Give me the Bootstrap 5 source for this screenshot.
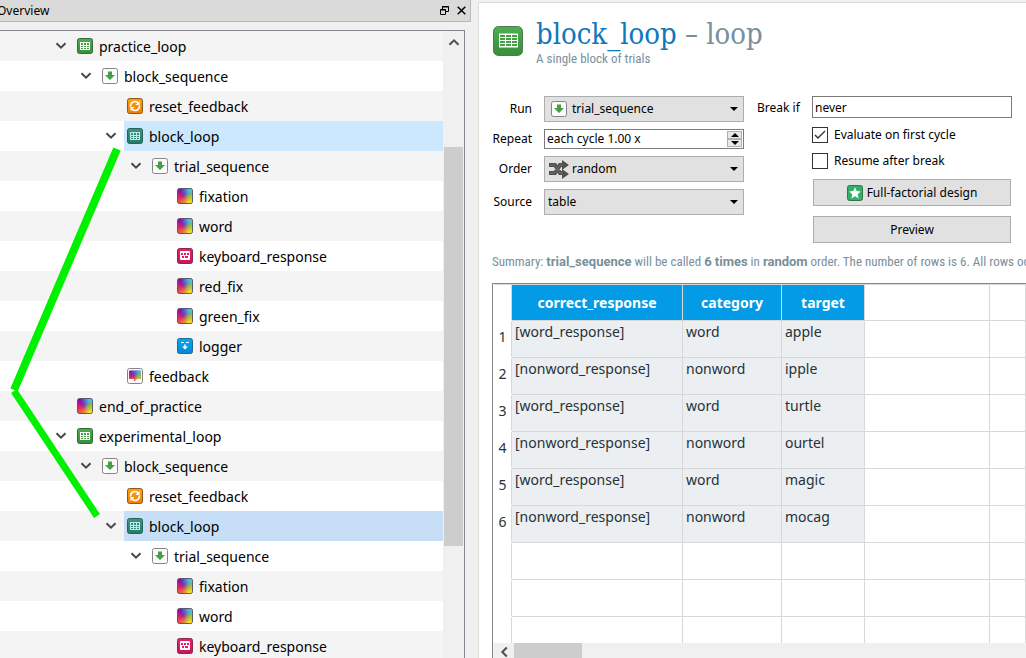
<!DOCTYPE html>
<html lang="en">
<head>
<meta charset="utf-8">
<meta name="viewport" content="width=device-width, initial-scale=1">
<title>block_loop</title>
<link href="https://cdn.jsdelivr.net/npm/bootstrap@5.3.0/dist/css/bootstrap.min.css" rel="stylesheet">
<style>
  body { background: #f0f0f0; color: #000; font: 12px/16px "Noto Sans", sans-serif; }

  /* overview dock */
  .dock { flex: 0 0 478px; }
  .dock-title { width: 471px; height: 22px; background: #dadada; border: 1px solid #b9b9b9; border-width: 0 1px 1px 0; }
  .dock-title h2 { font-size: 12px; line-height: 22px; margin-left: -3px; padding-top: 1px; font-weight: 400; }
  .dock-btn { width: 17px; height: 20px; border: 0; background: none; padding: 0; line-height: 0; }
  .tree-frame { width: 465px; margin-top: 8px; border: 1px solid #828790; border-width: 1px 1px 0 0; background: #f0f0f0; min-height: 0; }
  .tree { background: #fff; min-width: 0; margin-right: 1px; }
  .tree li { height: 30px; font-size: 14px; line-height: 32px; white-space: nowrap; }
  .tree li:nth-child(odd) { background: #f4f4f4; }
  .tree .d1 { padding-left: 49px; }
  .tree .d2 { padding-left: 74px; }
  .tree .d3 { padding-left: 99px; }
  .tree .d4 { padding-left: 124px; }
  .tree .d6 { padding-left: 174px; }
  .twist { flex: 0 0 25px; border: 0; background: none; padding: 0 2px 0 0; line-height: 0; }
  .item { gap: 6px; padding-left: 3px; }
  .item .ico { margin-top: 7px; }
  .item.picked { background: #cce8ff; }
  .item.picked.idle { background: #c6dff6; }
  .ico { width: 16px; height: 16px; flex: none; display: block; }
  .vbar { flex: 0 0 20px; background: #f0f0f0; padding-right: 1px; }
  .vbar button { border: 0; background: none; height: 22px; padding: 0; line-height: 0; }
  .vbar-thumb { margin-top: 94px; height: 399px; background: #cdcdcd; }
  .links { position: absolute; left: 0; top: 140px; pointer-events: none; }

  /* item editor */
  .editor { margin-top: 2px; padding: 0 0 0 13px; background: #fff; border: 1px solid #dcdcdc; border-width: 1px 0 0 1px; min-width: 0; }
  .editor-head { padding-top: 15px; gap: 13px; color: #78909c; }
  .editor-head h1 { font: 29px/33px "DejaVu Serif Condensed", "DejaVu Serif", serif; margin: 0; color: #78909c; }
  .editor-head h1 span { color: #0f77bd; }
  .cond { font-family: "Roboto Condensed", Roboto, sans-serif; font-size: 13px; line-height: 16px; color: #78909c; }
  .cond b { font-family: Roboto, sans-serif; }
  .controls { margin-top: 29px; gap: 13px; }
  .left-form { display: grid; grid-template-columns: 40px 200px; column-gap: 12px; row-gap: 7px; align-items: center; align-content: start; }
  .left-form label { text-align: right; }
  .right-form { width: 255px; display: grid; grid-template-columns: 43px 200px; column-gap: 12px; align-content: start; }
  .pick { position: relative; }
  .pick svg.lead-ico { position: absolute; left: 7px; top: 5px; pointer-events: none; }
  .pick svg.wide { left: 5px; top: 4px; width: 20px; height: 19px; }
  .pick select { display: block; width: 100%; height: 26px; padding: 0 3px; border: 1px solid #adadad; border-radius: 0; color: #000; appearance: none;
    background: #e1e1e1 url("data:image/svg+xml,%3Csvg xmlns='http://www.w3.org/2000/svg' width='8' height='4'%3E%3Cpath d='M0 0h8L4 4z'/%3E%3C/svg%3E") no-repeat right 5px center; }
  .pick .with-ico { padding-left: 27px; }
  .field { height: 22px; border: 1px solid #7a7a7a; padding: 0 2px; background: #fff; color: #000; width: 100%; border-radius: 0; }
  .spin { height: 20px; border: 1px solid #7a7a7a; background: #fff; padding: 1px; }
  .spin input { border: 0; padding: 0 1px; min-width: 0; outline: 0; }
  .spin button { width: 15px; height: 8px; border: 1px solid #b0b0b0; background: #e8e8e8; padding: 0; line-height: 0; }
  .options { gap: 10px; padding-top: 9px; }
  .tick { gap: 6px; height: 16px; }
  .tick input { appearance: none; width: 16px; height: 16px; margin: 0; border: 1px solid #333; background: #fff; }
  .tick input:checked { background: #fff url("data:image/svg+xml,%3Csvg xmlns='http://www.w3.org/2000/svg' width='14' height='14'%3E%3Cpath d='M2 7l3 3 7-7' fill='none' stroke='%23333' stroke-width='1.4'/%3E%3C/svg%3E"); }
  .push { height: 27px; margin: 0 1px; border: 1px solid #adadad; background: #e1e1e1; color: #000; gap: 4px; padding: 0; }
  .summary { margin: 11px 0 13px; white-space: nowrap; overflow: hidden; }

  /* trial table */
  .sheet-frame { border: 1px solid #828790; border-width: 1px 0 0 1px; min-height: 0; }
  .sheet { table-layout: fixed; border-collapse: collapse; width: 100%; font-size: 14px; line-height: 19px; color: #263238; }
  .sheet th, .sheet td { height: 37px; padding: 1px 3px; border: 1px solid #d8d8d8; vertical-align: top; white-space: nowrap; }
  .sheet thead th { height: 36px; vertical-align: middle; text-align: center; color: #fff; }
  .sheet thead .named { background: #039be5; }
  .sheet tbody th { font-weight: 400; text-align: center; padding: 6px 0 0; border-color: #fff; border-right-color: #d8d8d8; }
  .sheet thead th:first-child { border-left: 0; border-bottom-color: #fff; }
  .sheet .full td:nth-child(-n+4) { background: #eceff1; }
  .hbar { flex: 0 0 14px; background: #f0f0f0; }
  .hbar button { width: 21px; border: 0; background: none; padding: 3px 0 0; line-height: 0; }
  .hbar-thumb { width: 68px; background: #cdcdcd; }
</style>
</head>
<body class="vh-100 overflow-hidden">

<svg width="0" height="0" class="position-absolute" aria-hidden="true">
  <defs>
    <linearGradient id="gGreen" x2="0" y2="1"><stop stop-color="#4caf50"/><stop offset="1" stop-color="#388e3c"/></linearGradient>
    <linearGradient id="gTeal" x2="0" y2="1"><stop stop-color="#369a78"/><stop offset="1" stop-color="#267b69"/></linearGradient>
    <linearGradient id="gOrange" x2="0" y2="1"><stop stop-color="#ffa010"/><stop offset="1" stop-color="#f57c00"/></linearGradient>
    <linearGradient id="gPink" x2="0" y2="1"><stop stop-color="#ec1e63"/><stop offset="1" stop-color="#c2185b"/></linearGradient>
    <linearGradient id="gBlue" x2="0" y2="1"><stop stop-color="#03a9f4"/><stop offset="1" stop-color="#0288d1"/></linearGradient>
    <radialGradient id="rCyan" cx="1" cy="0" r=".8"><stop offset=".25" stop-color="#4bc4e0"/><stop offset="1" stop-color="#4bc4e0" stop-opacity="0"/></radialGradient>
    <radialGradient id="rYellow" cx=".85" cy="1" r=".7"><stop offset=".15" stop-color="#ffe616"/><stop offset=".5" stop-color="#e8c832" stop-opacity=".7"/><stop offset="1" stop-color="#e8b02c" stop-opacity="0"/></radialGradient>
    <radialGradient id="rRed" cx=".15" cy=".95" r=".85"><stop offset=".15" stop-color="#ff4a3c"/><stop offset="1" stop-color="#ee1a5a" stop-opacity="0"/></radialGradient>
    <radialGradient id="rGreen" cx="1" cy=".6" r=".5"><stop stop-color="#7edb10"/><stop offset="1" stop-color="#7edb10" stop-opacity="0"/></radialGradient>
    <linearGradient id="gViolet"><stop stop-color="#9c0aa0"/><stop offset=".45" stop-color="#5a1fc4"/><stop offset="1" stop-color="#4a78d8"/></linearGradient>
  </defs>
  <symbol id="loop" viewBox="0 0 16 16"><rect x=".5" y=".5" width="15" height="15" rx="2" fill="url(#gGreen)" stroke="#38663b"/><path d="M3 4h10v8H3z" fill="#fff"/><path d="M4 5h2v2H4zm3 0h2v2H7zm3 0h2v2h-2zM4 8h2v1H4zm3 0h2v1H7zm3 0h2v1h-2zM4 10h2v1H4zm3 0h2v1H7zm3 0h2v1h-2z" fill="#43a047"/></symbol>
  <symbol id="loopsel" viewBox="0 0 16 16"><rect x=".5" y=".5" width="15" height="15" rx="2" fill="url(#gTeal)" stroke="#2c6163"/><path d="M3 4h10v8H3z" fill="#c4e6f4"/><path d="M4 5h2v2H4zm3 0h2v2H7zm3 0h2v2h-2zM4 8h2v1H4zm3 0h2v1H7zm3 0h2v1h-2zM4 10h2v1H4zm3 0h2v1H7zm3 0h2v1h-2z" fill="#2f8b72"/></symbol>
  <symbol id="seq" viewBox="0 0 16 16"><rect x=".5" y=".5" width="15" height="15" rx="2" fill="#fbfbfb" stroke="#858585"/><path d="M6 3.500h4V7h3l-5 5-5-5h3z" fill="#43a047"/></symbol>
  <symbol id="reset" viewBox="0 0 16 16"><rect x=".5" y=".5" width="15" height="15" rx="2" fill="url(#gOrange)" stroke="#8a5a20"/><path d="M3.600 8.600A4.400 4.400 0 0 1 11 4.800M12.400 7.400A4.400 4.400 0 0 1 5 11.200" fill="none" stroke="#fff" stroke-width="1.600"/><path d="M12.600 2.800v4.100H8.500zM3.400 13.200V9.100h4.100z" fill="#fff"/></symbol>
  <symbol id="sketch" viewBox="0 0 16 16"><g id="rainbow"><rect x=".5" y=".5" width="15" height="15" rx="2" fill="url(#gViolet)"/><rect x=".5" y=".5" width="15" height="15" rx="2" fill="url(#rRed)"/><rect x=".5" y=".5" width="15" height="15" rx="2" fill="url(#rCyan)"/><rect x=".5" y=".5" width="15" height="15" rx="2" fill="url(#rGreen)"/><rect x=".5" y=".5" width="15" height="15" rx="2" fill="url(#rYellow)"/></g><rect x=".5" y=".5" width="15" height="15" rx="2" fill="none" stroke="#554a5c" stroke-opacity=".85"/></symbol>
  <clipPath id="bubble"><path d="M3 2.500h10a1 1 0 0 1 1 1V10a1 1 0 0 1-1 1H9.500L7 13.500V11H3a1 1 0 0 1-1-1V3.500a1 1 0 0 1 1-1z"/></clipPath>
  <symbol id="feedback" viewBox="0 0 16 16"><rect x=".5" y=".5" width="15" height="15" rx="2" fill="#fafafa" stroke="#858585"/><use href="#rainbow" clip-path="url(#bubble)"/></symbol>
  <symbol id="keys" viewBox="0 0 16 16"><rect x=".5" y=".5" width="15" height="15" rx="2" fill="url(#gPink)" stroke="#8b2850"/><rect x="3" y="3" width="10" height="9" rx="1" fill="#fff"/><path d="M4 5h2v2H4zm3 0h2v2H7zm3 0h2v2h-2zM5 8h2v2H5zm3 0h3v2H8z" fill="#e01e60"/></symbol>
  <symbol id="logger" viewBox="0 0 16 16"><rect x=".5" y=".5" width="15" height="15" rx="2" fill="url(#gBlue)" stroke="#206a94"/><path d="M4 4h3v1H4zm5 0h3v1H9zM7.200 6.500h1.600v2H11L8 11.500l-3-3h2.200z" fill="#fff"/></symbol>
  <symbol id="chev" viewBox="0 0 12 8"><path d="M1.500 1.200L6 5.700l4.500-4.500" fill="none" stroke="#484848" stroke-width="2"/></symbol>
</svg>

<div class="d-flex h-100">
  <aside class="dock d-flex flex-column position-relative">
    <header class="dock-title d-flex align-items-center">
      <h2 class="mb-0 me-auto">Overview</h2>
      <button class="dock-btn" aria-label="Float"><svg width="9" height="9"><path d="M2.500 3V.5h6v5H6M2 1h7M.5 3.500h5v5h-5zM0 4h6" fill="none" stroke="#000"/></svg></button>
      <button class="dock-btn" aria-label="Close"><svg width="9" height="9"><path d="M.7.700l7.600 7.600M8.300.700L.700 8.300" stroke="#000" stroke-width="1.500"/></svg></button>
    </header>
    <div class="tree-frame d-flex flex-fill overflow-hidden">
      <ul class="tree list-unstyled mb-0 flex-fill">
        <li class="d-flex d1"><button class="twist" aria-label="Collapse"><svg width="12" height="8"><use href="#chev"/></svg></button><div class="item d-flex flex-fill"><svg class="ico"><use href="#loop"/></svg>practice_loop</div></li>
        <li class="d-flex d2"><button class="twist" aria-label="Collapse"><svg width="12" height="8"><use href="#chev"/></svg></button><div class="item d-flex flex-fill"><svg class="ico"><use href="#seq"/></svg>block_sequence</div></li>
        <li class="d-flex d4"><div class="item d-flex flex-fill"><svg class="ico"><use href="#reset"/></svg>reset_feedback</div></li>
        <li class="d-flex d3"><button class="twist" aria-label="Collapse"><svg width="12" height="8"><use href="#chev"/></svg></button><div class="item picked d-flex flex-fill"><svg class="ico"><use href="#loopsel"/></svg>block_loop</div></li>
        <li class="d-flex d4"><button class="twist" aria-label="Collapse"><svg width="12" height="8"><use href="#chev"/></svg></button><div class="item d-flex flex-fill"><svg class="ico"><use href="#seq"/></svg>trial_sequence</div></li>
        <li class="d-flex d6"><div class="item d-flex flex-fill"><svg class="ico"><use href="#sketch"/></svg>fixation</div></li>
        <li class="d-flex d6"><div class="item d-flex flex-fill"><svg class="ico"><use href="#sketch"/></svg>word</div></li>
        <li class="d-flex d6"><div class="item d-flex flex-fill"><svg class="ico"><use href="#keys"/></svg>keyboard_response</div></li>
        <li class="d-flex d6"><div class="item d-flex flex-fill"><svg class="ico"><use href="#sketch"/></svg>red_fix</div></li>
        <li class="d-flex d6"><div class="item d-flex flex-fill"><svg class="ico"><use href="#sketch"/></svg>green_fix</div></li>
        <li class="d-flex d6"><div class="item d-flex flex-fill"><svg class="ico"><use href="#logger"/></svg>logger</div></li>
        <li class="d-flex d4"><div class="item d-flex flex-fill"><svg class="ico"><use href="#feedback"/></svg>feedback</div></li>
        <li class="d-flex d2"><div class="item d-flex flex-fill"><svg class="ico"><use href="#sketch"/></svg>end_of_practice</div></li>
        <li class="d-flex d1"><button class="twist" aria-label="Collapse"><svg width="12" height="8"><use href="#chev"/></svg></button><div class="item d-flex flex-fill"><svg class="ico"><use href="#loop"/></svg>experimental_loop</div></li>
        <li class="d-flex d2"><button class="twist" aria-label="Collapse"><svg width="12" height="8"><use href="#chev"/></svg></button><div class="item d-flex flex-fill"><svg class="ico"><use href="#seq"/></svg>block_sequence</div></li>
        <li class="d-flex d4"><div class="item d-flex flex-fill"><svg class="ico"><use href="#reset"/></svg>reset_feedback</div></li>
        <li class="d-flex d3"><button class="twist" aria-label="Collapse"><svg width="12" height="8"><use href="#chev"/></svg></button><div class="item picked idle d-flex flex-fill"><svg class="ico"><use href="#loopsel"/></svg>block_loop</div></li>
        <li class="d-flex d4"><button class="twist" aria-label="Collapse"><svg width="12" height="8"><use href="#chev"/></svg></button><div class="item d-flex flex-fill"><svg class="ico"><use href="#seq"/></svg>trial_sequence</div></li>
        <li class="d-flex d6"><div class="item d-flex flex-fill"><svg class="ico"><use href="#sketch"/></svg>fixation</div></li>
        <li class="d-flex d6"><div class="item d-flex flex-fill"><svg class="ico"><use href="#sketch"/></svg>word</div></li>
        <li class="d-flex d6"><div class="item d-flex flex-fill"><svg class="ico"><use href="#keys"/></svg>keyboard_response</div></li>
      </ul>
      <div class="vbar d-flex flex-column">
        <button aria-label="Scroll up"><svg width="12" height="8"><path d="M1.500 6.800L6 2.300l4.500 4.500" fill="none" stroke="#505050" stroke-width="2"/></svg></button>
        <div class="vbar-thumb"></div>
      </div>
    </div>
    <svg class="links" width="130" height="385"><path d="M117 9L14 250" stroke="#00f000" stroke-width="8"/><path d="M14 251l83 125" stroke="#00f000" stroke-width="7"/></svg>
  </aside>

  <main class="editor flex-fill d-flex flex-column overflow-hidden">
    <header class="editor-head d-flex">
      <svg width="31" height="31" class="mt-2 flex-shrink-0" viewBox="0 0 31 31"><rect x="1.500" y=".5" width="29" height="29" rx="5" fill="url(#gGreen)" stroke="#4e7a50"/><path d="M7 7.500h19v14H7z" fill="#fff"/><path d="M8 9h5v2H8zm6 0h5v2h-5zm6 0h5v2h-5zM8 12h5v2H8zm6 0h5v2h-5zm6 0h5v2h-5zM8 15h5v2H8zm6 0h5v2h-5zm6 0h5v2h-5zM8 18h5v2H8zm6 0h5v2h-5zm6 0h5v2h-5z" fill="#43a047"/></svg>
      <div>
        <h1><span>block_loop</span> – loop</h1>
        <div class="cond">A single block of trials</div>
      </div>
    </header>

    <form class="controls d-flex">
      <div class="left-form">
        <label for="run">Run</label>
        <div class="pick"><svg class="ico lead-ico"><use href="#seq"/></svg><select id="run" class="with-ico"><option>trial_sequence</option></select></div>
        <label for="repeat">Repeat</label>
        <div class="spin d-flex"><input id="repeat" class="flex-fill" value="each cycle 1.00 x"><div class="d-flex flex-column">
          <button type="button" aria-label="More"><svg width="8" height="4"><path d="M0 4h8L4 0z"/></svg></button>
          <button type="button" aria-label="Less"><svg width="8" height="4"><path d="M0 0h8L4 4z"/></svg></button></div></div>
        <label for="order">Order</label>
        <div class="pick"><svg class="lead-ico wide" viewBox="0 0 20 19"><path d="M0 5h6l5 8h4M0 13h6l5-8h4" fill="none" stroke="#505050" stroke-width="4"/><path d="M13 0l7 5-7 5zM13 9l7 5-7 5z" fill="#505050"/><path d="M1 5h5l5 8h3M1 13h5l5-8h3" fill="none" stroke="#707070"/></svg><select id="order" class="with-ico"><option>random</option></select></div>
        <label for="source">Source</label>
        <div class="pick"><select id="source"><option>table</option></select></div>
      </div>
      <div class="right-form">
        <label for="brk" class="pt-1 text-nowrap">Break if</label>
        <input id="brk" class="field" value="never">
        <span></span>
        <div class="options d-flex flex-column">
          <div class="tick d-flex align-items-center"><input type="checkbox" id="ev" checked><label for="ev">Evaluate on first cycle</label></div>
          <div class="tick d-flex align-items-center"><input type="checkbox" id="res"><label for="res">Resume after break</label></div>
          <button type="button" class="push d-flex align-items-center justify-content-center"><svg class="ico"><rect x=".5" y=".5" width="15" height="15" rx="2" fill="#31b069" stroke="#35754e"/><path d="M8 2.300l1.700 3.800 4.100.4-3.100 2.800.9 4.100L8 11.300l-3.600 2.100.9-4.100-3.100-2.800 4.100-.4z" fill="#fff"/></svg>Full-factorial design</button>
          <button type="button" class="push">Preview</button>
        </div>
      </div>
    </form>

    <p class="summary cond">Summary: <b>trial_sequence</b> will be called <b>6 times</b> in <b>random</b> order. The number of rows is 6. All rows occur</p>

    <div class="sheet-frame flex-fill d-flex flex-column">
      <div class="flex-fill overflow-hidden">
        <table class="sheet">
          <colgroup><col style="width:18px"><col style="width:171px"><col style="width:99px"><col style="width:83px"><col style="width:125px"><col></colgroup>
          <thead><tr><th></th><th class="named">correct_response</th><th class="named">category</th><th class="named">target</th><th></th><th></th></tr></thead>
          <tbody>
            <tr class="full"><th>1</th><td>[word_response]</td><td>word</td><td>apple</td><td></td><td></td></tr>
            <tr class="full"><th>2</th><td>[nonword_response]</td><td>nonword</td><td>ipple</td><td></td><td></td></tr>
            <tr class="full"><th>3</th><td>[word_response]</td><td>word</td><td>turtle</td><td></td><td></td></tr>
            <tr class="full"><th>4</th><td>[nonword_response]</td><td>nonword</td><td>ourtel</td><td></td><td></td></tr>
            <tr class="full"><th>5</th><td>[word_response]</td><td>word</td><td>magic</td><td></td><td></td></tr>
            <tr class="full"><th>6</th><td>[nonword_response]</td><td>nonword</td><td>mocag</td><td></td><td></td></tr>
            <tr><th></th><td></td><td></td><td></td><td></td><td></td></tr>
            <tr><th></th><td></td><td></td><td></td><td></td><td></td></tr>
            <tr><th></th><td></td><td></td><td></td><td></td><td></td></tr>
          </tbody>
        </table>
      </div>
      <div class="hbar d-flex">
        <button aria-label="Scroll left"><svg width="8" height="12"><path d="M6.800 1.500L2.300 6l4.500 4.500" fill="none" stroke="#505050" stroke-width="2"/></svg></button>
        <div class="hbar-thumb"></div>
      </div>
    </div>
  </main>
</div>
<script src="https://cdn.jsdelivr.net/npm/bootstrap@5.3.0/dist/js/bootstrap.bundle.min.js"></script>
</body>
</html>
